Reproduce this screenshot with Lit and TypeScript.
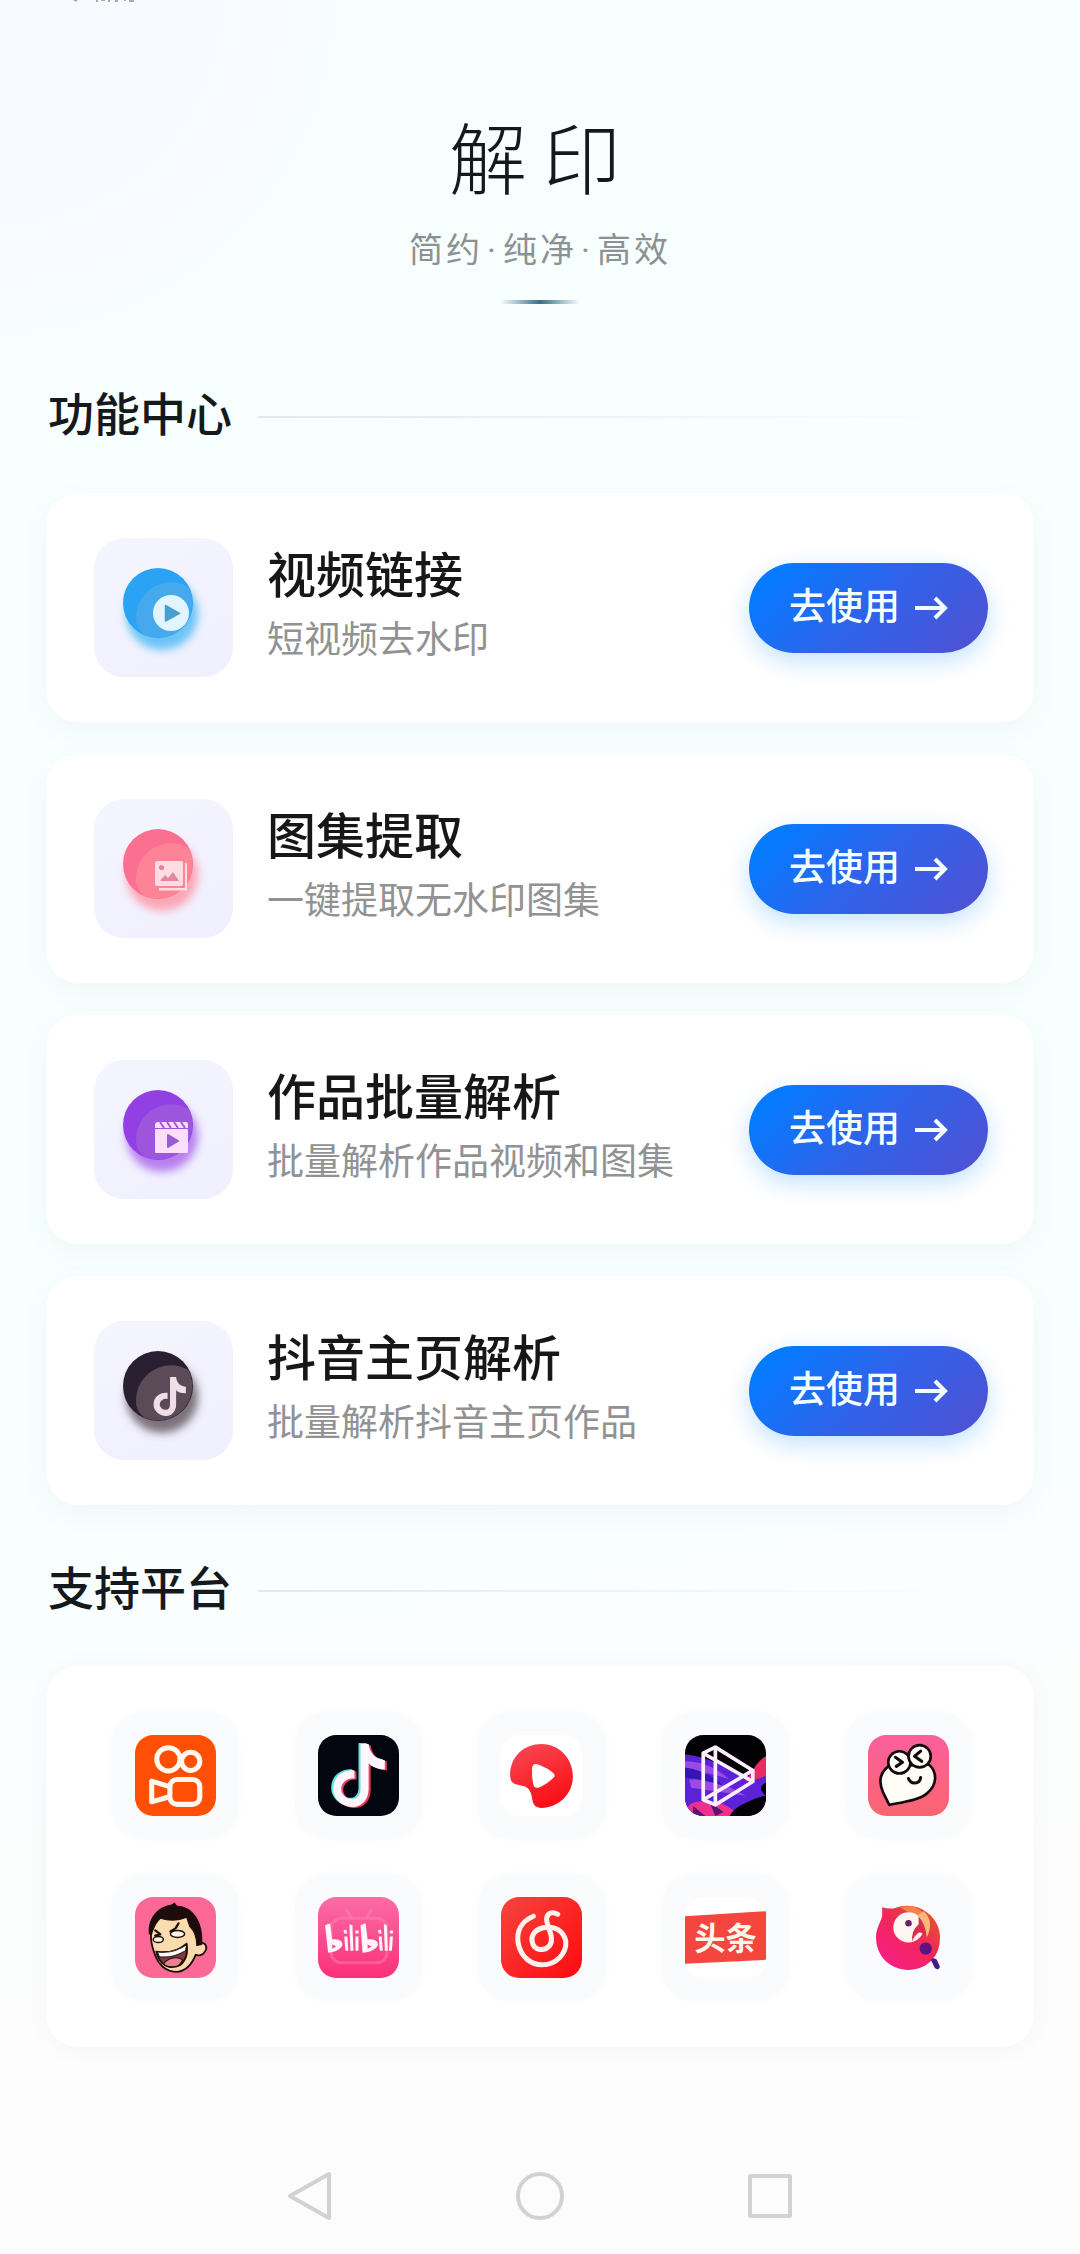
import { LitElement, html, svg, css, type SVGTemplateResult } from "lit";
import { customElement, property } from "lit/decorators.js";

interface Feature {
  kind: string;
  title: string;
  note: string;
}

const features: Feature[] = [
  { kind: "video", title: "视频链接", note: "短视频去水印" },
  { kind: "gallery", title: "图集提取", note: "一键提取无水印图集" },
  { kind: "batch", title: "作品批量解析", note: "批量解析作品视频和图集" },
  { kind: "douyin", title: "抖音主页解析", note: "批量解析抖音主页作品" },
];

const NOTE_PATH =
  "M42 9H50C51 18 57 24 66 25V34C60 34 54 32 50 28V53C50 64 43 71 34 71C24 71 15 63 15 53C15 42 24 34 36 35V43C29 42 23 47 23 53C23 59 28 63 34 63C39 63 42 59 42 53Z";

const featureColors: Record<string, [string, string, string]> = {
  video: ["#2aa3f5", "#46a9ee", "#3db4f3"],
  gallery: ["#fb7090", "#fd8496", "#ff8c9c"],
  batch: ["#9240e4", "#9c55dc", "#a45ce8"],
  douyin: ["#2a1f30", "#5b4a58", "#54464f"],
};

const featureGlyphs: Record<string, SVGTemplateResult> = {
  video: svg`
    <circle cx="77" cy="75" r="18" fill="#e2f4fd" />
    <path d="M71.500 67.500V83L85.500 75.300Z" fill="#469fd0" stroke="#469fd0" stroke-width="1.500" stroke-linejoin="round" />`,
  gallery: svg`
    <path d="M65 89H91V64H93V91.500H65Z" fill="#ffdce2" />
    <rect x="61" y="62" width="28" height="25" rx="2" fill="#ffdce2" />
    <circle cx="67.500" cy="68.500" r="2.600" fill="#e2899c" />
    <path d="M66 82L71 76L74 79L79 73L85 82Z" fill="#e2899c" />`,
  batch: svg`
    <rect x="61" y="69" width="33" height="24" rx="1" fill="#fbdffa" />
    <path d="M61 68V65Q61 62 64 62H92Q94 62 94 64V68Z" fill="#fbdffa" />
    <path d="M66 62L70 68M73 62L77 68M80 62L84 68M87 62L91 68" stroke="#a35bdc" stroke-width="2" />
    <path d="M74 75V87L84 81Z" fill="#9a5bd6" stroke="#9a5bd6" stroke-width="2" stroke-linejoin="round" />`,
  douyin: svg`
    <path transform="translate(51 51) scale(.61)" d=${NOTE_PATH} fill="#f1dfe8" stroke="#f1dfe8" stroke-width="2" />`,
};

const platforms: { name: string; art: SVGTemplateResult }[] = [
  {
    name: "快手",
    art: svg`
      <rect width="80" height="80" rx="18" fill="#ff4f06" />
      <g fill="none" stroke="#fff8ee" stroke-width="5">
        <circle cx="33" cy="24" r="11.500" />
        <circle cx="55" cy="26" r="9" />
        <rect x="34.500" y="44" width="29.500" height="24.500" rx="7" />
        <path d="M34 51L16.500 45.500V66L34 61" stroke-linejoin="round" />
      </g>`,
  },
  {
    name: "抖音",
    art: svg`
      <rect width="80" height="80" rx="18" fill="#04060f" />
      <path transform="translate(-2 -1)" d=${NOTE_PATH} fill="#5fe3dc" />
      <path transform="translate(2 1)" d=${NOTE_PATH} fill="#f03a62" />
      <path d=${NOTE_PATH} fill="#fff5fa" />`,
  },
  {
    name: "西瓜视频",
    art: svg`
      <defs><linearGradient id="melon" x1="0" y1="0" x2=".4" y2="1"><stop offset="0" stop-color="#f84a56" /><stop offset="1" stop-color="#fa1119" /></linearGradient></defs>
      <rect width="80" height="80" rx="18" fill="#fff" />
      <path d="M9 40C9 21 23 9 40 9C58 9 71 24 71 41C71 58 57 72 40 72C34 72 32 69 31 64C30 57 28 51 21 50C14 49 9 48 9 40Z" fill="url(#melon)" />
      <path d="M31 31Q32 28 36 29Q47 33 52 38Q54 40 52 42Q45 49 37 52Q33 53 32 49Q30 40 31 31Z" fill="#fff" />`,
  },
  {
    name: "剪映",
    art: svg`
      <defs><clipPath id="tile"><rect width="80" height="80" rx="18" /></clipPath></defs>
      <g clip-path="url(#tile)">
        <rect width="80" height="80" fill="#020104" />
        <path d="M0 19Q18 21 34 29L66 42Q80 30 80 24V47Q70 52 80 60Q66 62 54 72L46 80H0Z" fill="#5c22d8" />
        <path d="M0 26Q24 26 44 44Q24 36 0 36ZM4 44Q30 42 60 60Q34 56 6 52Z" fill="#9a4be6" />
        <path d="M0 32Q20 34 38 50Q18 44 0 42Z" fill="#3416b4" />
        <path d="M60 46Q72 24 80 21V40Q72 44 60 46Z" fill="#ea2a63" />
        <path d="M0 80Q2 64 18 66Q36 64 50 76L54 80Z" fill="#ee2f8b" />
        <path d="M8 70L20 80H8ZM24 66L38 76L30 80Z" fill="#5c1272" />
        <path d="M44 80Q52 66 80 62V80Z" fill="#040208" />
      </g>
      <g fill="none" stroke="#ffeefd" stroke-width="3.600" stroke-linejoin="round">
        <path d="M18 18L30 12L67 35V46L30 69L18 64Z" />
        <path d="M30 12V69M18 18L67 46M67 35L18 64" />
      </g>`,
  },
  {
    name: "皮皮虾",
    art: svg`
      <defs><linearGradient id="shrimp" x1="0" y1="0" x2="0" y2="1"><stop offset="0" stop-color="#fb609b" /><stop offset="1" stop-color="#fb6470" /></linearGradient></defs>
      <rect width="80" height="80" rx="18" fill="url(#shrimp)" />
      <g stroke="#120a0e" stroke-width="2.600" stroke-linejoin="round" stroke-linecap="round">
        <path d="M20 31C11 38 11 48 15 57L21 69C36 66 52 64 59 57C68 49 69 37 60 29Z" fill="#fffef6" />
        <circle cx="31" cy="27" r="11" fill="#fffef6" />
        <circle cx="51" cy="21" r="11" fill="#fffef6" />
        <path d="M27 22L34 27L28 31M52 16L46 21L53 26M40 43C42 49 51 49 52 42" fill="none" stroke-width="3" />
      </g>`,
  },
  {
    name: "皮皮搞笑",
    art: svg`
      <rect width="80" height="80" rx="18" fill="#fd6997" />
      <g stroke="#1d0c0b" stroke-linejoin="round" stroke-linecap="round">
        <path d="M16 32C18 22 27 15 38 13C53 12 64 24 65 45C70 45 72 50 69 54C67 58 62 58 60 57C56 67 50 73 42 74C31 74 23 67 19 55C16 47 15 40 16 32Z" fill="#fbdcae" stroke-width="1.800" />
        <path d="M14 36C13 19 24 10 36 8L39 6L41 9C58 10 67 25 66 47L61 48C61 40 59 34 54 29L51 20C42 24 32 23 25 21C20 25 18 31 16 38Z" fill="#1d0c0b" stroke-width="1" />
        <path d="M20 33L25 37L20 38M35 34L40 31L43 26" fill="none" stroke-width="2.200" />
        <ellipse cx="23" cy="42" rx="5" ry="3" fill="#fff5e4" stroke-width="1.500" />
        <ellipse cx="42" cy="36.500" rx="7" ry="3.400" fill="#fff5e4" stroke-width="1.500" />
        <path d="M21 54C33 56 44 52 51 46C53 58 48 69 38 69C29 70 23 63 21 54Z" fill="#7d3b3f" stroke-width="1.800" />
        <path d="M22 54C33 56 44 52 51 47L50 53C42 58 32 60 24 59Z" fill="#fffdf8" stroke-width="1" />
        <path d="M28 66C33 60 42 58 47 62C45 67 41 69 38 69C33 69 30 68 28 66Z" fill="#e9838b" stroke-width="1" />
      </g>`,
  },
  {
    name: "哔哩哔哩",
    art: svg`
      <defs><linearGradient id="bili" x1="0" y1="0" x2="0" y2="1"><stop offset="0" stop-color="#fb6ca6" /><stop offset="1" stop-color="#fb2f7a" /></linearGradient></defs>
      <rect width="80" height="80" rx="18" fill="url(#bili)" />
      <g fill="none" stroke="#ff8fb8" stroke-opacity=".4" stroke-width="3" stroke-linecap="round">
        <rect x="13" y="21" width="55" height="44" rx="10" />
        <path d="M28 13L33 20M53 13L48 20" />
      </g>
      <g fill="#fff4f8">
        <path fill-rule="evenodd" d="M7 28L12 26L14 42C22 41 25 45 24 48C22 52 16 55 10 55ZM14 47V51L18 49Z" />
        <path fill-rule="evenodd" d="M42 28L47 26L49 42C57 41 60 45 59 48C57 52 51 55 44 55ZM49 47V51L53 49Z" />
        <path d="M26 39H29L30 53H27ZM31 27L34 28L35 53H32ZM37 39H40V53H37ZM60 39H63L64 53H61ZM65 27L68 28L69 53H66ZM71 39H74L73 53H70ZM25 33L28 32L29 36H26ZM37 33H40V36H37ZM59 33L62 32L63 36H60ZM71 33H74V36H71Z" />
      </g>`,
  },
  {
    name: "网易云音乐",
    art: svg`
      <defs><linearGradient id="cloud" x1="0" y1="0" x2="1" y2="1"><stop offset="0" stop-color="#f6443e" /><stop offset="1" stop-color="#fd0b10" /></linearGradient></defs>
      <rect width="80" height="80" rx="18" fill="url(#cloud)" />
      <path d="M32 19C20 24 15 34 17 46C20 60 30 67 41 67C54 67 65 56 64 44C62 33 53 29 44 30C34 31 29 38 31 45C33 53 43 54 48 48C52 43 49 36 46 27C43 18 48 13 56 17" fill="none" stroke="#fff1ec" stroke-width="5" stroke-linecap="round" />`,
  },
  {
    name: "今日头条",
    art: svg`
      <rect width="80" height="80" rx="18" fill="#fff" />
      <path d="M0 19L80 14V62L0 66Z" fill="#f4463f" />
      <text class="headline" x="40" y="52" text-anchor="middle">头条</text>`,
  },
  {
    name: "鹦鹉",
    art: svg`
      <defs><linearGradient id="bird" x1="0" y1="1" x2=".8" y2="0"><stop offset="0" stop-color="#fb1c93" /><stop offset=".6" stop-color="#f02758" /><stop offset="1" stop-color="#e8542d" /></linearGradient></defs>
      <path d="M14 10Q20 12 26 11Q44 5 58 15C68 22 72 33 71 43C70 61 56 72 40 72C22 72 9 59 8 42C7 33 12 26 14 19Z" fill="url(#bird)" />
      <path d="M32 10Q46 7 54 15Q62 23 59 35Q54 26 50 22Z" fill="#f3854a" />
      <circle cx="40" cy="30" r="15" fill="#fff6f4" />
      <path d="M50 19Q57 26 58 40Q52 33 49 36Q45 39 44 44Q42 34 50 27Z" fill="#d92e4c" />
      <path d="M55 14Q66 24 58 40Q57 26 49 18Z" fill="#f9b778" />
      <circle cx="40" cy="26" r="3.200" fill="#6b1f6a" />
      <circle cx="57" cy="51" r="6" fill="#5b1482" />
      <path d="M62 62Q65 59 68 62L71 69Q70 73 66 70Z" fill="#431a86" />`,
  },
];

@customElement("section-heading")
export class SectionHeading extends LitElement {
  @property() label = "";

  static styles = css`
    :host {
      display: flex;
      align-items: center;
      gap: 26px;
    }
    .label {
      margin: 0;
      padding: 0 0 12px 2px;
      font-size: 46px;
      line-height: 54px;
      font-weight: 500;
      color: #15191b;
    }
    .rule {
      flex: 1;
      height: 2px;
      background: linear-gradient(90deg, #e2eaeb, #eef5f5 50%, transparent 90%);
    }
  `;

  render() {
    return html`<h2 class="label">${this.label}</h2><span class="rule"></span>`;
  }
}

@customElement("feature-card")
export class FeatureCard extends LitElement {
  @property({ attribute: false }) feature!: Feature;

  static styles = css`
    :host {
      display: flex;
      align-items: center;
      gap: 34px;
      padding: 45px 46px 45px 48px;
      border-radius: 32px;
      background: #fff;
      box-shadow: 0 8px 32px rgba(40, 20, 20, 0.04);
    }
    .icon {
      flex: none;
      width: 139px;
      height: 139px;
      border-radius: 30px;
      background: linear-gradient(150deg, #f4f6fe, #f0effe);
    }
    .icon svg {
      display: block;
      width: 100%;
      height: 100%;
    }
    .text {
      flex: 1;
      min-width: 0;
      padding-bottom: 8px;
    }
    .title {
      margin: 0;
      font-size: 49px;
      line-height: 66px;
      font-weight: 500;
      color: #171717;
    }
    .note {
      margin: 0;
      font-size: 37px;
      line-height: 64px;
      color: #929292;
    }
    .go {
      display: flex;
      align-items: center;
      gap: 14px;
      height: 90px;
      padding: 0 40px;
      border: 0;
      border-radius: 45px;
      background: linear-gradient(135deg, #047bff 10%, #2f63ea 50%, #5250d2);
      box-shadow: 0 8px 24px rgba(0, 132, 255, 0.24);
      color: #f4feff;
      font: inherit;
      font-size: 37px;
      font-weight: 500;
      cursor: pointer;
    }
    .caption {
      padding-bottom: 8px;
    }
    .arrow {
      width: 34px;
      height: 24px;
      fill: none;
      stroke: currentColor;
      stroke-width: 4;
    }
  `;

  render() {
    const { kind, title, note } = this.feature;
    const [back, front, glow] = featureColors[kind];
    return html`
      <div class="icon">
        <svg viewBox="0 0 139 139" aria-hidden="true">
          <defs><filter id="soft" x="-30%" y="-30%" width="160%" height="160%"><feGaussianBlur stdDeviation="4" /></filter></defs>
          <circle cx="68" cy="76" r="36" fill=${glow} fill-opacity=".75" filter="url(#soft)" />
          <circle cx="64" cy="65" r="35" fill=${back} />
          <path d="M42 79A35 35 0 0 1 94.500 49A35 35 0 0 1 86 91.500A35 35 0 0 1 51 97Q41 90 42 79Z" fill=${front} />
          ${featureGlyphs[kind]}
        </svg>
      </div>
      <div class="text">
        <h3 class="title">${title}</h3>
        <p class="note">${note}</p>
      </div>
      <button class="go" type="button">
        <span class="caption">去使用</span>
        <svg class="arrow" viewBox="0 0 34 24" aria-hidden="true"><path d="M1 12H31M21 2L31 12L21 22" /></svg>
      </button>
    `;
  }
}

@customElement("app-root")
export class AppRoot extends LitElement {
  static styles = css`
    :host {
      display: flex;
      flex-direction: column;
      min-height: 100vh;
      overflow: hidden;
      font-family: "Noto Sans CJK SC", "Noto Sans", sans-serif;
      background: radial-gradient(circle at 0 0, #f8faff 220px, rgba(248, 250, 255, 0) 420px),
        linear-gradient(170deg, #f8ffff 60%, #fdfdfd 84%);
    }
    .status {
      width: 64px;
      height: 3px;
      margin-left: 72px;
      fill: #a9adb2;
    }
    .hero {
      display: flex;
      flex-direction: column;
      align-items: center;
      padding-top: 96px;
    }
    .brand {
      margin: 0;
      padding-left: 6px;
      font-size: 78px;
      line-height: 112px;
      font-weight: 300;
      letter-spacing: 16px;
      color: #14191a;
    }
    .slogan {
      margin: 12px 0 0;
      font-family: Roboto, "Noto Sans CJK SC", sans-serif;
      font-size: 34px;
      line-height: 54px;
      letter-spacing: 3px;
      color: #8c9292;
    }
    .dot {
      padding: 0 4px;
    }
    .bar {
      width: 80px;
      height: 4px;
      margin-top: 23px;
      background: linear-gradient(90deg, transparent, #3a7088 50%, transparent);
    }
    .content {
      display: flex;
      flex: 1;
      flex-direction: column;
      padding: 80px 46px 48px;
    }
    .features {
      display: flex;
      flex-direction: column;
      gap: 32px;
      margin: 43px 0 53px;
    }
    .platforms {
      display: grid;
      grid-template-columns: repeat(5, 1fr);
      gap: 35px 56px;
      margin: 42px 0 0;
      padding: 46px 62px 46px 66px;
      border-radius: 32px;
      background: #fff;
      box-shadow: 0 2px 24px rgba(30, 20, 20, 0.04);
      list-style: none;
    }
    .platform {
      display: flex;
      align-items: center;
      justify-content: center;
      height: 127px;
      border-radius: 32px;
      background: #fafbfc;
      box-shadow: 0 0 12px #fafbfc;
    }
    .platform svg {
      width: 81px;
      height: 81px;
    }
    .headline {
      font-size: 31px;
      font-weight: 700;
      fill: #fff6ea;
    }
    .system {
      display: flex;
      align-items: center;
      justify-content: center;
      gap: 180px;
      height: 116px;
      background: #fcfcfc;
    }
    .key {
      display: flex;
      padding: 0;
      border: 0;
      background: none;
    }
    .key svg {
      width: 50px;
      height: 50px;
      fill: none;
      stroke: #d2d2d2;
      stroke-width: 4;
      stroke-linejoin: round;
    }
  `;

  render() {
    return html`
      <svg class="status" viewBox="0 0 64 3" aria-hidden="true">
        <path d="M1 0H6L4 2ZM24 0H26V2H24ZM29 0H33V1H29ZM36 0H38V2H36ZM43 0H46V2H43ZM52 0H54V1H52ZM57 0H62V2H57Z" />
      </svg>
      <header class="hero">
        <h1 class="brand">解印</h1>
        <p class="slogan">简约<span class="dot">·</span>纯净<span class="dot">·</span>高效</p>
        <span class="bar"></span>
      </header>
      <main class="content">
        <section-heading label="功能中心"></section-heading>
        <div class="features">
          ${features.map((feature) => html`<feature-card .feature=${feature}></feature-card>`)}
        </div>
        <section-heading label="支持平台"></section-heading>
        <ul class="platforms">
          ${platforms.map(
            ({ name, art }) => html`<li class="platform"><svg viewBox="0 0 80 80" role="img" aria-label=${name}>${art}</svg></li>`,
          )}
        </ul>
      </main>
      <nav class="system">
        <button class="key" type="button" aria-label="返回"><svg viewBox="0 0 50 50"><path d="M44 3V47L5 25Z" /></svg></button>
        <button class="key" type="button" aria-label="主屏幕"><svg viewBox="0 0 50 50"><circle cx="25" cy="25" r="22" /></svg></button>
        <button class="key" type="button" aria-label="最近任务"><svg viewBox="0 0 50 50"><rect x="5" y="5" width="40" height="40" rx="1" /></svg></button>
      </nav>
    `;
  }
}
